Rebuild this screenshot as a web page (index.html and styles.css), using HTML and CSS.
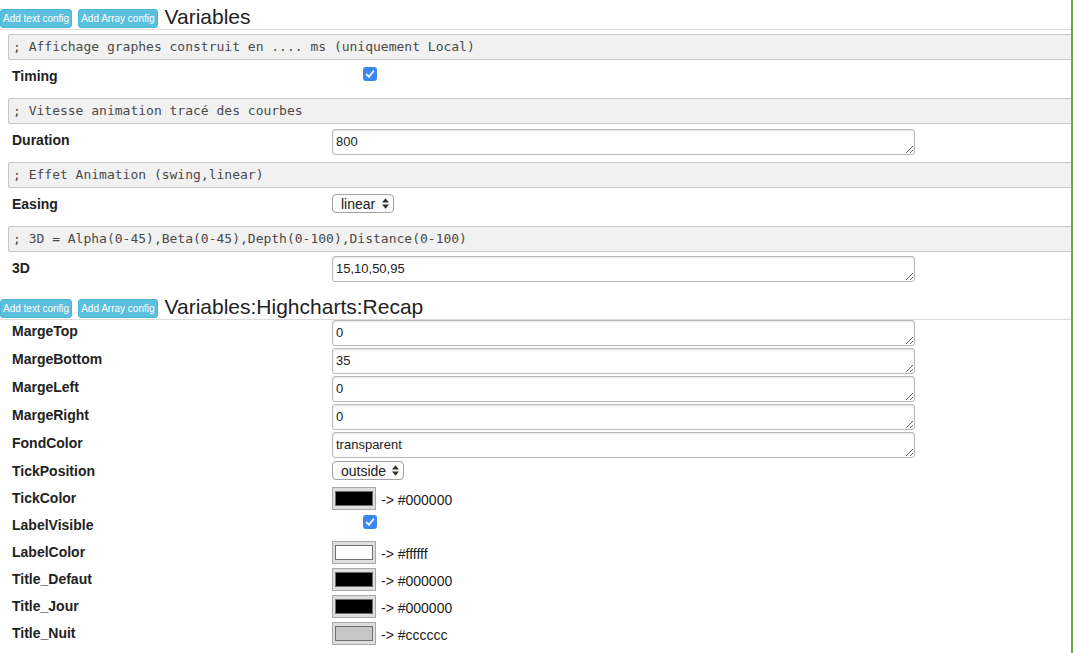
FILE: index.html
```html
<!DOCTYPE html>
<html lang="fr">
<head>
<meta charset="utf-8">
<title>Variables</title>
<link rel="stylesheet" href="styles.css">
</head>
<body>
<div class="page">
  <section class="section">
    <div class="head">
      <button class="btn">Add text config</button>
      <button class="btn">Add Array config</button>
      <span class="title">Variables</span>
    </div>
    <div class="body body-first">
      <div class="comment">; Affichage graphes construit en .... ms (uniquement Local)</div>
      <div class="row">
        <div class="label">Timing</div>
        <div class="val val-check"><span class="check"><svg width="14" height="14" viewBox="0 0 14 14"><polyline points="3.6,7.4 6,9.8 10.4,4.2" fill="none" stroke="#fff" stroke-width="1.7" stroke-linecap="round" stroke-linejoin="round"/></svg></span></div>
      </div>
      <div class="comment">; Vitesse animation tracé des courbes</div>
      <div class="row">
        <div class="label">Duration</div>
        <div class="val val-ta"><textarea class="ta">800</textarea></div>
      </div>
      <div class="comment">; Effet Animation (swing,linear)</div>
      <div class="row">
        <div class="label">Easing</div>
        <div class="val val-sel"><span class="sel sel-linear">linear<svg class="arrows" width="7" height="11" viewBox="0 0 7 11"><polygon points="0,4.6 3.5,0.2 7,4.6" fill="#333"/><polygon points="0,6.4 3.5,10.8 7,6.4" fill="#333"/></svg></span></div>
      </div>
      <div class="comment">; 3D = Alpha(0-45),Beta(0-45),Depth(0-100),Distance(0-100)</div>
      <div class="row">
        <div class="label">3D</div>
        <div class="val val-ta3"><textarea class="ta">15,10,50,95</textarea></div>
      </div>
    </div>
  </section>

  <section class="section">
    <div class="head">
      <button class="btn">Add text config</button>
      <button class="btn">Add Array config</button>
      <span class="title">Variables:Highcharts:Recap</span>
    </div>
    <div class="body">
      <div class="row2 row2-ta"><div class="label2">MargeTop</div><div class="val"><textarea class="ta">0</textarea></div></div>
      <div class="row2 row2-ta"><div class="label2">MargeBottom</div><div class="val"><textarea class="ta">35</textarea></div></div>
      <div class="row2 row2-ta"><div class="label2">MargeLeft</div><div class="val"><textarea class="ta">0</textarea></div></div>
      <div class="row2 row2-ta"><div class="label2">MargeRight</div><div class="val"><textarea class="ta">0</textarea></div></div>
      <div class="row2 row2-ta"><div class="label2">FondColor</div><div class="val"><textarea class="ta">transparent</textarea></div></div>
      <div class="row2"><div class="label2">TickPosition</div><div class="val val2-sel"><span class="sel sel-outside">outside<svg class="arrows" width="7" height="11" viewBox="0 0 7 11"><polygon points="0,4.6 3.5,0.2 7,4.6" fill="#333"/><polygon points="0,6.4 3.5,10.8 7,6.4" fill="#333"/></svg></span></div></div>
      <div class="row2"><div class="label2">TickColor</div><div class="val val-color"><span class="swatch"><span class="swatch-in sw-black"></span></span><span class="hex">-&gt; #000000</span></div></div>
      <div class="row2"><div class="label2">LabelVisible</div><div class="val val2-check"><span class="check"><svg width="14" height="14" viewBox="0 0 14 14"><polyline points="3.6,7.4 6,9.8 10.4,4.2" fill="none" stroke="#fff" stroke-width="1.7" stroke-linecap="round" stroke-linejoin="round"/></svg></span></div></div>
      <div class="row2"><div class="label2">LabelColor</div><div class="val val-color"><span class="swatch"><span class="swatch-in sw-white"></span></span><span class="hex">-&gt; #ffffff</span></div></div>
      <div class="row2"><div class="label2">Title_Defaut</div><div class="val val-color"><span class="swatch"><span class="swatch-in sw-black"></span></span><span class="hex">-&gt; #000000</span></div></div>
      <div class="row2"><div class="label2">Title_Jour</div><div class="val val-color"><span class="swatch"><span class="swatch-in sw-black"></span></span><span class="hex">-&gt; #000000</span></div></div>
      <div class="row2"><div class="label2">Title_Nuit</div><div class="val val-color"><span class="swatch"><span class="swatch-in sw-grey"></span></span><span class="hex">-&gt; #cccccc</span></div></div>
    </div>
  </section>
</div>
</body>
</html>
```

FILE: styles.css
```css
html, body {
  margin: 0;
  padding: 0;
  background: #fff;
}
body {
  font-family: "Liberation Sans", Arial, Helvetica, sans-serif;
  color: #222;
  overflow: hidden;
}
.page {
  width: 1071px;
  height: 653px;
  border-right: 2px solid #5fb02c;
  overflow: hidden;
}
.head {
  display: flex;
  align-items: center;
  height: 22px;
  padding-top: 7px;
  border-bottom: 1px solid #dcdcdc;
}
.btn {
  font-family: "Liberation Sans", Arial, sans-serif;
  font-size: 10px;
  line-height: 13px;
  color: #fff;
  background: #5bc0de;
  border: 1px solid #4ab6d8;
  border-radius: 3px;
  padding: 2px 2px;
  margin: 0 6px 0 0;
  height: 19px;
  white-space: nowrap;
}
.btn + .btn { margin-right: 7px; }
.title {
  font-size: 21px;
  line-height: 24px;
  color: #222;
  margin-top: -2px;
}
.body {
  padding-left: 8px;
}
.body-first {
  padding-top: 4px;
}
.comment {
  box-sizing: border-box;
  height: 26px;
  background: #f1f1f1;
  border: 1px solid #c6c6c6;
  border-right: none;
  border-radius: 3px 0 0 3px;
  padding: 4px 4px;
  font-family: "DejaVu Sans Mono", "Liberation Mono", monospace;
  font-size: 13px;
  line-height: 16px;
  color: #4a4a4a;
  white-space: pre;
}
.row {
  display: flex;
  height: 38px;
}
.label {
  width: 320px;
  padding-left: 4px;
  padding-top: 8px;
  font-size: 14px;
  line-height: 16px;
  font-weight: bold;
  color: #222;
}
.val { display: flex; align-items: flex-start; }
.val-check { padding-top: 7px; padding-left: 31px; }
.val-ta { padding-top: 5px; }
.val-ta3 { padding-top: 4px; }
.val-sel { padding-top: 6px; }

.ta {
  box-sizing: border-box;
  width: 583px;
  height: 26px;
  margin: 0;
  padding: 4px 3px 2px;
  font-family: "Liberation Sans", Arial, sans-serif;
  font-size: 13px;
  line-height: 16px;
  color: #222;
  border: 1px solid #b9b9b9;
  border-radius: 3px;
  box-shadow: inset 0 1px 2px rgba(0,0,0,0.12);
  overflow: hidden;
  resize: both;
  background: #fff;
}
.check {
  display: block;
  width: 14px;
  height: 14px;
  border-radius: 3px;
  background: #3a86f4;
}
.check svg { display: block; }
.sel {
  box-sizing: border-box;
  display: flex;
  align-items: center;
  height: 19px;
  padding-left: 8px;
  border: 1px solid #a3a3a3;
  border-radius: 4px;
  background: #fbfbfb;
  font-size: 14px;
  line-height: 16px;
  color: #222;
}
.sel-linear { width: 62px; }
.sel-outside { width: 72px; }
.arrows { margin-left: auto; margin-right: 4px; }

.row2 {
  display: flex;
  height: 27px;
}
.row2-ta { height: 28px; }
.label2 {
  width: 320px;
  padding-left: 4px;
  padding-top: 3px;
  font-size: 14px;
  line-height: 16px;
  font-weight: bold;
  color: #222;
}
.val2-sel { padding-top: 1px; }
.val2-check { padding-top: 1px; padding-left: 31px; }
.val-color { align-items: center; height: 23px; }
.swatch {
  box-sizing: border-box;
  display: block;
  width: 44px;
  height: 23px;
  border: 1px solid #a8a8a8;
  background: #dedede;
  padding: 3px 2px;
}
.swatch-in {
  display: block;
  height: 15px;
  box-sizing: border-box;
  border: 1px solid #6e6e6e;
}
.sw-black { background: #000; }
.sw-white { background: #fff; }
.sw-grey { background: #c6c6c6; }
.hex {
  margin-left: 5px;
  font-size: 14px;
  line-height: 16px;
  color: #222;
  padding-top: 3px;
}
```
